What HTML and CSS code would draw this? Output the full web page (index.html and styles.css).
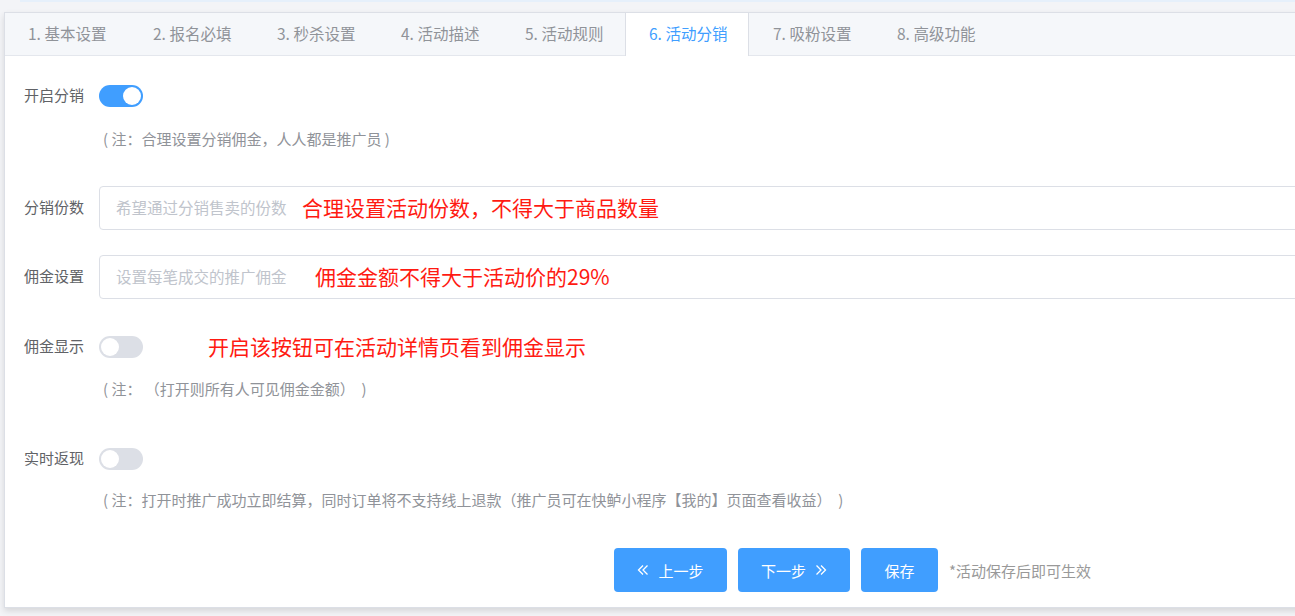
FILE: index.html
```html
<!DOCTYPE html>
<html lang="zh-CN">
<head>
    <meta charset="UTF-8">
    <meta name="viewport" content="width=device-width, initial-scale=1.0">
    <title>活动分销</title>
    <link rel="stylesheet" href="styles.css">
</head>
<body>

<div class="top-line"></div>

<div class="card">
    <div class="tabs">
        <div class="tab">1. 基本设置</div>
        <div class="tab">2. 报名必填</div>
        <div class="tab">3. 秒杀设置</div>
        <div class="tab">4. 活动描述</div>
        <div class="tab">5. 活动规则</div>
        <div class="tab active">6. 活动分销</div>
        <div class="tab">7. 吸粉设置</div>
        <div class="tab">8. 高级功能</div>
    </div>

    <div class="content">
        <div class="form-item">
            <label class="label">开启分销</label>
            <span class="switch on"><span class="knob"></span></span>
        </div>
        <div class="tip tip-first">( 注：合理设置分销佣金，人人都是推广员 )</div>

        <div class="form-item row-input1">
            <label class="label">分销份数</label>
            <div class="input-wrap">
                <input type="text" class="input" placeholder="希望通过分销售卖的份数">
                <!-- 红色批注 -->
                <span class="mark mark-1">合理设置活动份数，不得大于商品数量</span>
            </div>
        </div>

        <div class="form-item row-input2">
            <label class="label">佣金设置</label>
            <div class="input-wrap">
                <input type="text" class="input" placeholder="设置每笔成交的推广佣金">
                <span class="mark mark-2">佣金金额不得大于活动价的29%</span>
            </div>
        </div>

        <div class="form-item row-show">
            <label class="label">佣金显示</label>
            <span class="switch"><span class="knob"></span></span>
            <span class="mark-inline">开启该按钮可在活动详情页看到佣金显示</span>
        </div>
        <div class="tip tip-show">( 注： （打开则所有人可见佣金金额）  )</div>

        <div class="form-item row-cash">
            <label class="label">实时返现</label>
            <span class="switch"><span class="knob"></span></span>
        </div>
        <div class="tip tip-cash">( 注：打开时推广成功立即结算，同时订单将不支持线上退款（推广员可在快鲈小程序【我的】页面查看收益）  )</div>

        <div class="footer">
            <button class="btn btn-prev">
                <svg class="arrow" viewBox="0 0 12 12" width="12" height="12"><path d="M6 1.5 1.5 6 6 10.5M10.5 1.5 6 6l4.5 4.5" fill="none" stroke="#fff" stroke-width="1.3"/></svg>
                上一步
            </button>
            <button class="btn btn-next">
                下一步
                <svg class="arrow" viewBox="0 0 12 12" width="12" height="12"><path d="M6 1.5 10.5 6 6 10.5M1.5 1.5 6 6l-4.5 4.5" fill="none" stroke="#fff" stroke-width="1.3"/></svg>
            </button>
            <button class="btn btn-save">保存</button>
            <span class="hint">*活动保存后即可生效</span>
        </div>
    </div>
</div>

</body>
</html>
```

FILE: styles.css
```css
/* 页面基础 */
body { margin: 0; padding: 0; background-color: #f3f4f7; font-family: "Noto Sans CJK SC", "Noto Sans", sans-serif; overflow: hidden; width: 1295px; height: 616px; }
.top-line { height: 2px; background-color: #e6f0fb; margin-left: 20px; }

.card { margin: 10px 0 0 4px; width: 1320px; background-color: #fff; border: 1px solid #dcdfe6; box-shadow: 0 3px 6px rgba(0, 0, 0, 0.12); }

/* 标签页 */
.tabs { display: flex; height: 42px; background-color: #f5f7fa; border-bottom: 1px solid #e4e7ed; }
.tab { box-sizing: border-box; width: 124px; padding-left: 23px; height: 43px; line-height: 40px; font-size: 15.5px; color: #909399; border-left: 1px solid transparent; border-right: 1px solid transparent; white-space: nowrap; }
.tab:first-child { border-left: none; }
.tab.active { color: #409eff; background-color: #fff; border-left-color: #dcdfe6; border-right-color: #dcdfe6; }

/* 表单 */
.content { padding: 18px 0 15px 19px; }
.form-item { display: flex; align-items: center; height: 44px; }
.label { width: 75px; font-size: 15px; line-height: 20px; padding-bottom: 3px; color: #606266; flex-shrink: 0; }

.switch { position: relative; display: inline-block; width: 44px; height: 22px; border-radius: 11px; background-color: #dcdfe6; flex-shrink: 0; }
.switch .knob { position: absolute; top: 2px; left: 2px; width: 18px; height: 18px; border-radius: 50%; background-color: #fff; }
.switch.on { background-color: #409eff; }
.switch.on .knob { left: 24px; }

.tip { margin-left: 79px; font-size: 15px; line-height: 20px; padding-bottom: 2px; color: #909399; white-space: pre; }
.tip-first { margin-top: 11px; }
.tip-show { margin-top: 10px; }
.tip-cash { margin-top: 9px; }

.row-input1 { margin-top: 35px; }
.row-input2 { margin-top: 25px; }
.row-show { margin-top: 26px; }
.row-cash { margin-top: 36px; }

.input-wrap { position: relative; flex: 1; }
.input { box-sizing: border-box; width: 100%; height: 44px; padding: 0 16px 2px; border: 1px solid #dcdfe6; border-radius: 4px; font-size: 15.5px; font-family: inherit; color: #606266; outline: none; }
.input::placeholder { color: #c0c4cc; }

.mark, .mark-inline { font-size: 21px; color: #ff1a12; white-space: nowrap; line-height: 28px; }
.mark { position: absolute; top: 7px; }
.mark-1 { left: 203px; }
.mark-2 { left: 216px; }
.mark-inline { margin-left: 65px; padding-bottom: 2px; }

/* 底部按钮 */
.footer { display: flex; align-items: center; margin-top: 36px; padding-left: 590px; }
.btn { display: flex; align-items: center; justify-content: center; gap: 9px; height: 44px; padding: 0; margin-right: 11px; background-color: #409eff; color: #fff; border: none; border-radius: 4px; font-size: 15px; font-family: inherit; cursor: pointer; }
.btn-prev { width: 113px; }
.btn-next { width: 112px; }
.btn-save { width: 77px; }
.hint { font-size: 15px; color: #999; }
```
